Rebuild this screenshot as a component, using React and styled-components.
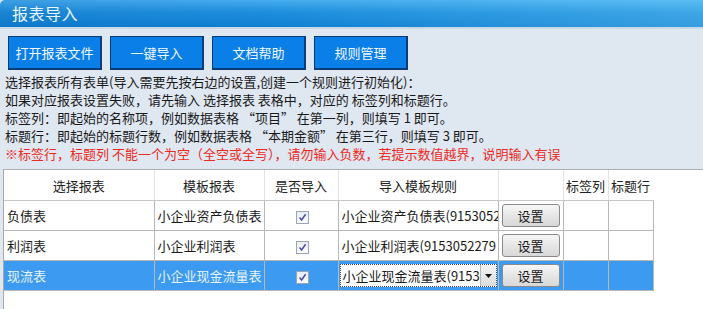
import React from "react";
import styled, { createGlobalStyle } from "styled-components";

const Global = createGlobalStyle`
  html, body { margin: 0; padding: 0; }
  body { font-family: "Noto Sans CJK SC", "Noto Sans", sans-serif; }
`;

const Window = styled.div`
  width: 703px;
  height: 309px;
  overflow: hidden;
  background: #dfe7f1;
  display: flex;
  flex-direction: column;
`;

const TitleBar = styled.div`
  height: 29px;
  flex: none;
  display: flex;
  align-items: flex-end;
  padding: 0 0 2px 12px;
  box-sizing: border-box;
  border-top-left-radius: 5px;
  border-bottom: 2px solid #c9d8e8;
  background:
    linear-gradient(90deg, rgba(0,60,140,0.12) 0%, rgba(0,0,0,0) 40%, rgba(140,225,255,0.3) 100%),
    linear-gradient(180deg, #46adee 0%, #1e8edd 45%, #1080d2 100%);
  color: #eaf5ff;
  font-size: 16px;
  letter-spacing: 0.5px;
`;

const Toolbar = styled.div`
  display: flex;
  gap: 8px;
  padding: 7px 0 0 8px;
`;

const ToolButton = styled.button`
  width: 94px;
  height: 34px;
  background: #0b7fe8;
  border: 1px solid #0a3c78;
  border-right-width: 2px;
  border-bottom-width: 2px;
  color: #f2f8ff;
  font-family: inherit;
  font-size: 13px;
  padding: 0;
  cursor: pointer;
`;

const Notes = styled.div`
  padding: 3px 0 0 5px;
  display: flex;
  flex-direction: column;
`;

const Line = styled.div`
  font-size: 13px;
  line-height: 18px;
  height: 18px;
  white-space: nowrap;
  color: ${(p) => (p.$warn ? "#ee2a1e" : "#1a1a1a")};
`;

const TableArea = styled.div`
  flex: 1;
  margin-top: 6px;
  margin-left: 3px;
  background: #ffffff;
  border-top: 1px solid #b0b0b0;
  border-left: 1px solid #a8a8a8;
`;

const Table = styled.table`
  border-collapse: collapse;
  table-layout: fixed;
  font-size: 13px;
  color: #1a1a1a;
`;

const Th = styled.th`
  height: 30px;
  padding: 0;
  font-weight: normal;
  text-align: center;
  border-right: 1px solid ${(p) => (p.$last ? "transparent" : "#e2e2e2")};
  border-bottom: 1px solid #c8c8c8;
  background: #ffffff;
  color: #222;
`;

const Tr = styled.tr`
  background: ${(p) => (p.$selected ? "#3c9af0" : "#ffffff")};
  color: ${(p) => (p.$selected ? "#e6f3ff" : "#1a1a1a")};
`;

const Td = styled.td`
  height: 29px;
  padding: 0 0 0 3px;
  border-right: 1px solid #b8b8b8;
  border-bottom: 1px solid #b8b8b8;
  white-space: nowrap;
  overflow: hidden;
  text-align: ${(p) => (p.$center ? "center" : "left")};
  vertical-align: middle;
`;

const CheckBox = styled.span`
  display: inline-block;
  width: 11px;
  height: 11px;
  border: 1px solid #9aa5b3;
  background: linear-gradient(180deg, #e9edf2, #fafbfc);
  vertical-align: middle;
  position: relative;
  svg { position: absolute; left: 1px; top: 1px; }
`;

const SetButton = styled.button`
  width: 58px;
  height: 23px;
  border: 1px solid #8a8a8a;
  border-radius: 3px;
  background: linear-gradient(180deg, #f6f6f6 0%, #e6e6e6 50%, #d8d8d8 100%);
  font-family: inherit;
  font-size: 13px;
  color: #1a1a1a;
  padding: 0;
  display: block;
`;

const RuleText = styled.div`
  width: 156px;
  overflow: hidden;
  white-space: nowrap;
`;

const Combo = styled.div`
  display: flex;
  height: 23px;
  width: 157px;
  margin-left: -2px;
  border: 1px dotted #444;
  background: #ffffff;
  color: #1a1a1a;
  box-sizing: border-box;
  align-items: center;
`;

const ComboText = styled.div`
  flex: 1;
  overflow: hidden;
  white-space: nowrap;
  padding-left: 2px;
`;

const ComboArrow = styled.div`
  width: 15px;
  height: 21px;
  flex: none;
  border-left: 1px solid #b8b8b8;
  background: linear-gradient(180deg, #f4f4f4, #dcdcdc);
  display: flex;
  align-items: center;
  justify-content: center;
`;

const Check = () => (
  <CheckBox>
    <svg width="9" height="9" viewBox="0 0 9 9">
      <path d="M1.5 4.5 L3.6 7 L7.6 1.2" fill="none" stroke="#4d4bb8" strokeWidth="1.5" />
    </svg>
  </CheckBox>
);

const rows = [
  { a: "负债表", b: "小企业资产负债表", c: "小企业资产负债表(915305227", sel: false },
  { a: "利润表", b: "小企业利润表", c: "小企业利润表(9153052279", sel: false },
  { a: "现流表", b: "小企业现金流量表", c: "小企业现金流量表(91530", sel: true },
];

export default function App() {
  return (
    <Window>
      <Global />
      <TitleBar>报表导入</TitleBar>
      <Toolbar>
        <ToolButton>打开报表文件</ToolButton>
        <ToolButton>一键导入</ToolButton>
        <ToolButton>文档帮助</ToolButton>
        <ToolButton>规则管理</ToolButton>
      </Toolbar>
      <Notes>
        <Line>选择报表所有表单(导入需要先按右边的设置,创建一个规则进行初始化)：</Line>
        <Line>如果对应报表设置失败，请先输入 选择报表 表格中，对应的 标签列和标题行。</Line>
        <Line>标签列：即起始的名称项，例如数据表格 “项目” 在第一列，则填写 1 即可。</Line>
        <Line>标题行：即起始的标题行数，例如数据表格 “本期金额” 在第三行，则填写 3 即可。</Line>
        <Line $warn>※标签行，标题列 不能一个为空（全空或全写），请勿输入负数，若提示数值越界，说明输入有误</Line>
      </Notes>
      <TableArea>
        <Table>
          <colgroup>
            <col style={{ width: 150 }} />
            <col style={{ width: 110 }} />
            <col style={{ width: 74 }} />
            <col style={{ width: 160 }} />
            <col style={{ width: 65 }} />
            <col style={{ width: 45 }} />
            <col style={{ width: 45 }} />
          </colgroup>
          <thead>
            <tr>
              <Th>选择报表</Th>
              <Th>模板报表</Th>
              <Th>是否导入</Th>
              <Th>导入模板规则</Th>
              <Th></Th>
              <Th>标签列</Th>
              <Th $last>标题行</Th>
            </tr>
          </thead>
          <tbody>
            {rows.map((r) => (
              <Tr key={r.a} $selected={r.sel}>
                <Td>{r.a}</Td>
                <Td>{r.b}</Td>
                <Td $center>
                  <Check />
                </Td>
                <Td>
                  {r.sel ? (
                    <Combo>
                      <ComboText>{r.c}</ComboText>
                      <ComboArrow>
                        <svg width="7" height="4" viewBox="0 0 7 4">
                          <path d="M0 0 L7 0 L3.5 4 Z" fill="#111" />
                        </svg>
                      </ComboArrow>
                    </Combo>
                  ) : (
                    <RuleText>{r.c}</RuleText>
                  )}
                </Td>
                <Td>
                  <SetButton>设置</SetButton>
                </Td>
                <Td></Td>
                <Td></Td>
              </Tr>
            ))}
          </tbody>
        </Table>
      </TableArea>
    </Window>
  );
}
